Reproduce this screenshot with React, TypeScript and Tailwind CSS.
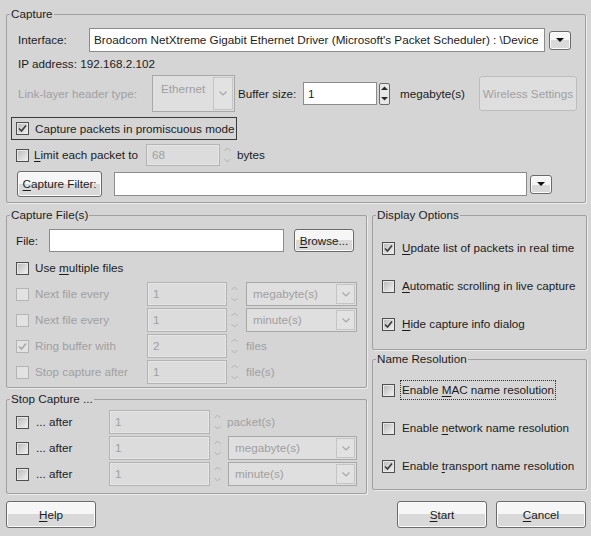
import type { ReactNode } from 'react'

const btn =
  'flex items-center justify-center rounded-[3px] border border-[#6b6b6b] bg-gradient-to-b from-[#f6f6f6] from-50% to-[#d9d9d9] to-50% shadow-[inset_0_0_0_1px_#fbfbfb]'

function U({ children }: { children: ReactNode }) {
  return <span className="underline underline-offset-2">{children}</span>
}

function Check({ checked = false, disabled = false }: { checked?: boolean; disabled?: boolean }) {
  return (
    <span
      className={`flex h-[13px] w-[13px] shrink-0 items-center justify-center border ${
        disabled
          ? 'border-[#b4b4b4] bg-[#e2e2e2]'
          : 'border-[#4f4f4f] bg-gradient-to-br from-[#b8b8b8] to-[#f4f4f4] shadow-[inset_0_0_0_1px_#e8e8e8]'
      }`}
    >
      {checked && (
        <svg width="9" height="9" viewBox="0 0 9 9">
          <path
            d="M1 4.5 L3.5 7 L8 1.5"
            fill="none"
            stroke={disabled ? '#a8a8a8' : '#3a3a3a'}
            strokeWidth="1.6"
          />
        </svg>
      )}
    </span>
  )
}

function Spin({ disabled = false }: { disabled?: boolean }) {
  const c = disabled ? '#b0b0b0' : '#2a2a2a'
  return (
    <span
      className={`flex h-[22px] w-[11px] shrink-0 flex-col ${
        disabled ? '' : 'h-[20px] rounded-[2px] border border-[#6b6b6b] bg-[#e8e8e8]'
      }`}
    >
      <span className="flex flex-1 items-center justify-center">
        <svg width="7" height="5" viewBox="0 0 7 5">
          {disabled ? (
            <path d="M0.5 4 L3.5 1 L6.5 4" fill="none" stroke={c} strokeWidth="1" />
          ) : (
            <path d="M0 4 L3.5 0.5 L7 4 Z" fill={c} />
          )}
        </svg>
      </span>
      <span className="flex flex-1 items-center justify-center">
        <svg width="7" height="5" viewBox="0 0 7 5">
          {disabled ? (
            <path d="M0.5 1 L3.5 4 L6.5 1" fill="none" stroke={c} strokeWidth="1" />
          ) : (
            <path d="M0 1 L3.5 4.5 L7 1 Z" fill={c} />
          )}
        </svg>
      </span>
    </span>
  )
}

function DisInput({ value, w, h = 'h-[24px]' }: { value: string; w: string; h?: string }) {
  return (
    <span
      className={`flex ${w} ${h} shrink-0 items-center border border-[#b3b3b3] bg-[#dcdcdc] pl-[5px] text-[#a0a0a0] shadow-[inset_0_0_0_1px_#e6e6e6]`}
    >
      {value}
    </span>
  )
}

function DisCombo({ value, w }: { value: string; w: string }) {
  return (
    <span
      className={`flex ${w} h-[24px] shrink-0 items-stretch border border-[#a8a8a8] bg-[#dfdfdf] p-[1px] text-[#a0a0a0]`}
    >
      <span className="flex flex-1 items-center pl-[5px]">{value}</span>
      <span className="flex w-[19px] items-center justify-center border border-[#c4c4c4] bg-[#e2e2e2]">
        <svg width="8" height="5" viewBox="0 0 8 5">
          <path d="M0.5 0.5 L4 4 L7.5 0.5" fill="none" stroke="#a8a8a8" strokeWidth="1.2" />
        </svg>
      </span>
    </span>
  )
}

function DropBtn() {
  return (
    <span className={`${btn} h-[19px] w-[22px] shrink-0 rounded-[3px] border-[#4a4a4a]`}>
      <svg width="8" height="4" viewBox="0 0 8 4">
        <path d="M0 0 L8 0 L4 4 Z" fill="#111" />
      </svg>
    </span>
  )
}

function Group({ title, children, className = '' }: { title: string; children: ReactNode; className?: string }) {
  return (
    <fieldset className={`rounded-[2px] border border-[#a0a0a0] p-0 shadow-[1px_1px_0_#ebebeb] ${className}`}>
      <legend className="ml-[3px] px-[1px] leading-[14px]">{title}</legend>
      {children}
    </fieldset>
  )
}

function Opt({ checked, children, focus = false }: { checked?: boolean; children: ReactNode; focus?: boolean }) {
  return (
    <div className="flex h-[20px] items-center">
      <Check checked={checked} />
      <span className={`ml-[6px] px-[1px] ${focus ? 'outline outline-1 outline-dotted outline-[#333]' : ''}`}>
        {children}
      </span>
    </div>
  )
}

export default function App() {
  return (
    <div className="h-[536px] w-[591px] overflow-hidden bg-[#d5d5d5] pl-[6px] pt-[7px] font-['Liberation_Sans',Arial,sans-serif] text-[11.7px] text-[#1c1c1c]">
      <Group title="Capture" className="w-[580px]">
        <div className="flex flex-col pb-[5px] pl-[11px] pt-[7px]">
          <div className="flex h-[24px] items-center">
            <span className="w-[71px]">Interface:</span>
            <span className="flex h-[24px] w-[456px] items-center overflow-hidden whitespace-nowrap border border-[#8c8c8c] bg-white pl-[4px]">
              Broadcom NetXtreme Gigabit Ethernet Driver (Microsoft's Packet Scheduler) : \Device
            </span>
            <span className="ml-[4px]">
              <DropBtn />
            </span>
          </div>
          <div className="mt-[2px] flex h-[20px] items-center">IP address: 192.168.2.102</div>
          <div className="mt-[1px] flex h-[37px] items-center">
            <span className="w-[134px] text-[#a0a0a0]">Link-layer header type:</span>
            <span className="flex h-[37px] w-[83px] items-stretch border border-[#a8a8a8] bg-[#dfdfdf] p-[1px] text-[#a0a0a0]">
              <span className="flex-1 pl-[7px] pt-[3px]">Ethernet</span>
              <span className="flex w-[20px] items-center justify-center border border-[#c4c4c4] bg-[#e2e2e2]">
                <svg width="8" height="5" viewBox="0 0 8 5">
                  <path d="M0.5 0.5 L4 4 L7.5 0.5" fill="none" stroke="#a8a8a8" strokeWidth="1.2" />
                </svg>
              </span>
            </span>
            <span className="ml-[3px] w-[65px]">Buffer size:</span>
            <span className="flex h-[23px] w-[74px] items-center border border-[#8c8c8c] bg-white pl-[4px]">1</span>
            <span className="ml-[2px]">
              <Spin />
            </span>
            <span className="ml-[10px]">megabyte(s)</span>
            <span className="ml-[14px] flex h-[35px] w-[98px] items-center justify-center rounded-[3px] border border-[#bdbdbd] bg-[#dedede] text-[#a0a0a0]">
              Wireless Settings
            </span>
          </div>
          <div className="-ml-[7px] mt-[5px] flex h-[23px] w-[226px] items-center border border-[#3a3a3a] pl-[4px]">
            <Check checked />
            <span className="ml-[6px]">Capture packets in promiscuous mode</span>
          </div>
          <div className="-ml-[2px] mt-[4px] flex h-[22px] items-center">
            <Check />
            <span className="ml-[5px] w-[112px]">
              <U>L</U>imit each packet to
            </span>
            <DisInput value="68" w="w-[74px]" h="h-[22px]" />
            <span className="ml-[2px]">
              <Spin disabled />
            </span>
            <span className="ml-[4px]">bytes</span>
          </div>
          <div className="-ml-[1px] mt-[5px] flex h-[26px] items-center">
            <span className={`${btn} h-[26px] w-[85px]`}>
              <span>
                <U>C</U>apture Filter:
              </span>
            </span>
            <span className="ml-[12px] h-[24px] w-[413px] border border-[#8c8c8c] bg-white" />
            <span className="ml-[3px]">
              <DropBtn />
            </span>
          </div>
        </div>
      </Group>

      <div className="mt-[5px] flex gap-[5px]">
        <div className="flex w-[361px] flex-col">
          <Group title="Capture File(s)">
            <div className="flex flex-col pb-[3px] pl-[9px] pt-[7px]">
              <div className="flex h-[23px] items-center">
                <span className="w-[33px]">File:</span>
                <span className="h-[23px] w-[235px] border border-[#8c8c8c] bg-white" />
                <span className={`${btn} ml-[10px] h-[23px] w-[60px] border-[#3a3a3a]`}>
                  <span>
                    <U>B</U>rowse...
                  </span>
                </span>
              </div>
              <div className="mt-[6px] flex h-[20px] items-center">
                <Check />
                <span className="ml-[6px]">
                  Use <U>m</U>ultiple files
                </span>
              </div>
              {[
                { label: 'Next file every', v: '1', unit: 'megabyte(s)', combo: true, mt: 'mt-[4px]' },
                { label: 'Next file every', v: '1', unit: 'minute(s)', combo: true, mt: 'mt-[2px]' },
                { label: 'Ring buffer with', v: '2', unit: 'files', combo: false, checked: true, mt: 'mt-[2px]' },
                { label: 'Stop capture after', v: '1', unit: 'file(s)', combo: false, mt: 'mt-[2px]' },
              ].map((r, i) => (
                <div key={i} className={`${r.mt} flex h-[24px] items-center`}>
                  <Check disabled checked={r.checked} />
                  <span className="ml-[6px] w-[112px] text-[#a0a0a0]">{r.label}</span>
                  <DisInput value={r.v} w="w-[80px]" />
                  <span className="ml-[2px]">
                    <Spin disabled />
                  </span>
                  {r.combo ? (
                    <span className="ml-[6px]">
                      <DisCombo value={r.unit} w="w-[111px]" />
                    </span>
                  ) : (
                    <span className="ml-[6px] text-[#a0a0a0]">{r.unit}</span>
                  )}
                </div>
              ))}
            </div>
          </Group>
          <Group title="Stop Capture ..." className="mt-[4px]">
            <div className="flex flex-col gap-[2px] pb-[7px] pl-[9px] pt-[4px]">
              {['packet(s)', 'megabyte(s)', 'minute(s)'].map((unit, i) => (
                <div key={i} className="flex h-[24px] items-center">
                  <Check />
                  <span className="ml-[7px] w-[73px]">... after</span>
                  <DisInput value="1" w="w-[101px]" />
                  <span className="ml-[2px]">
                    <Spin disabled />
                  </span>
                  {i === 0 ? (
                    <span className="ml-[4px] text-[#a0a0a0]">{unit}</span>
                  ) : (
                    <span className="ml-[5px]">
                      <DisCombo value={unit} w="w-[129px]" />
                    </span>
                  )}
                </div>
              ))}
            </div>
          </Group>
        </div>

        <div className="flex w-[215px] flex-col">
          <Group title="Display Options">
            <div className="flex flex-col gap-[18px] pb-[15px] pl-[9px] pt-[16px]">
              <Opt checked>
                <U>U</U>pdate list of packets in real time
              </Opt>
              <Opt>
                <U>A</U>utomatic scrolling in live capture
              </Opt>
              <Opt checked>
                <U>H</U>ide capture info dialog
              </Opt>
            </div>
          </Group>
          <Group title="Name Resolution" className="mt-[2px]">
            <div className="flex flex-col gap-[18px] pb-[13px] pl-[9px] pt-[14px]">
              <Opt focus>
                Enable <U>M</U>AC name resolution
              </Opt>
              <Opt>
                Enable <U>n</U>etwork name resolution
              </Opt>
              <Opt checked>
                Enable <U>t</U>ransport name resolution
              </Opt>
            </div>
          </Group>
        </div>
      </div>

      <div className="mt-[7px] flex h-[27px] w-[580px] items-center">
        <span className={`${btn} h-[27px] w-[90px]`}>
          <span>
            <U>H</U>elp
          </span>
        </span>
        <span className={`${btn} ml-auto h-[27px] w-[90px]`}>
          <span>
            <U>S</U>tart
          </span>
        </span>
        <span className={`${btn} ml-[9px] h-[27px] w-[90px]`}>
          <span>
            <U>C</U>ancel
          </span>
        </span>
      </div>
    </div>
  )
}
